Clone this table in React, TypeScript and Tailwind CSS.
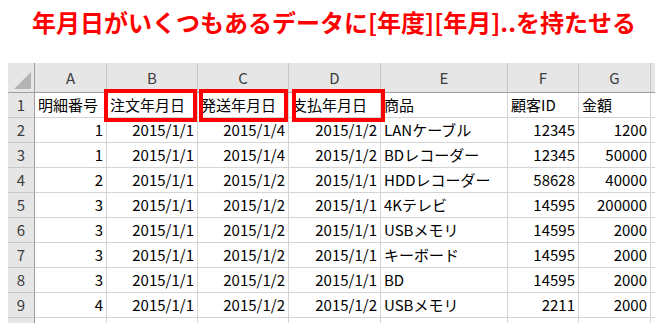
import React from "react";

const COLS = ["A", "B", "C", "D", "E", "F", "G"];
const WIDTHS = ["w-[72px]", "w-[91px]", "w-[91px]", "w-[92px]", "w-[127px]", "w-[71px]", "w-[72px]"];

// [text, right-aligned?]
const ROWS: (string | number)[][] = [
  ["明細番号", "注文年月日", "発送年月日", "支払年月日", "商品", "顧客ID", "金額"],
  [1, "2015/1/1", "2015/1/4", "2015/1/2", "LANケーブル", 12345, 1200],
  [1, "2015/1/1", "2015/1/4", "2015/1/2", "BDレコーダー", 12345, 50000],
  [2, "2015/1/1", "2015/1/2", "2015/1/1", "HDDレコーダー", 58628, 40000],
  [3, "2015/1/1", "2015/1/2", "2015/1/1", "4Kテレビ", 14595, 200000],
  [3, "2015/1/1", "2015/1/2", "2015/1/1", "USBメモリ", 14595, 2000],
  [3, "2015/1/1", "2015/1/2", "2015/1/1", "キーボード", 14595, 2000],
  [3, "2015/1/1", "2015/1/2", "2015/1/1", "BD", 14595, 2000],
  [4, "2015/1/1", "2015/1/2", "2015/1/2", "USBメモリ", 2211, 2000],
];

const isRight = (v: string | number) => typeof v === "number" || /^\d{4}\//.test(String(v));

export default function App() {
  return (
    <div
      className="w-[668px] h-[335px] bg-white overflow-hidden"
      style={{ fontFamily: '"Noto Sans CJK JP", "Noto Sans", sans-serif' }}
    >
      {/* Title */}
      <div className="h-[63px] pt-[7px] text-center">
        <h1 className="text-[#ff0000] text-[24px] leading-[30px] font-bold tracking-[0px]">
          年月日がいくつもあるデータに[年度][年月]..を持たせる
        </h1>
      </div>

      {/* Sheet */}
      <div className="relative ml-[8px] w-[647px] h-[260px] overflow-hidden text-[15px] text-black">
        {/* column header row */}
        <div className="flex h-[30px] bg-[#e6e6e6] border-b border-[#9e9e9e]">
          <div className="relative w-[27px] shrink-0 border-r border-[#9e9e9e]">
            <div className="absolute right-[3px] bottom-[3px] w-0 h-0 border-l-[17px] border-l-transparent border-b-[17px] border-b-[#b4b4b4]" />
          </div>
          {COLS.map((c, i) => (
            <div
              key={c}
              className={`${WIDTHS[i]} shrink-0 border-r border-[#c8c8c8] flex items-center justify-center text-[#3c3c3c] leading-none`}
            >
              {c}
            </div>
          ))}
          <div className="flex-1" />
        </div>

        {/* data rows */}
        {ROWS.map((row, r) => (
          <div key={r} className="flex h-[25px]">
            <div className="w-[27px] shrink-0 bg-[#e6e6e6] border-r border-b border-r-[#9e9e9e] border-b-[#c8c8c8] flex items-center justify-center text-[#3c3c3c]">
              {r + 1}
            </div>
            {row.map((v, i) => (
              <div
                key={i}
                className={`${WIDTHS[i]} shrink-0 border-r border-b border-[#d4d4d4] flex items-center whitespace-nowrap overflow-visible ${
                  isRight(v) ? "justify-end pr-[3px]" : "justify-start pl-[3px]"
                }`}
              >
                {v}
              </div>
            ))}
            <div className="flex-1 border-b border-[#d4d4d4]" />
          </div>
        ))}

        {/* partial row 10 */}
        <div className="flex h-[5px]">
          <div className="w-[27px] shrink-0 bg-[#e6e6e6] border-r border-[#9e9e9e]" />
          {WIDTHS.map((w, i) => (
            <div key={i} className={`${w} shrink-0 border-r border-[#d4d4d4]`} />
          ))}
        </div>

        {/* red highlight boxes */}
        <div className="absolute left-[96px] top-[26px] w-[93px] h-[33px] border-4 border-[#ff0000]" />
        <div className="absolute left-[191px] top-[26px] w-[89px] h-[33px] border-4 border-[#ff0000]" />
        <div className="absolute left-[284px] top-[26px] w-[93px] h-[33px] border-4 border-[#ff0000]" />
      </div>
    </div>
  );
}
